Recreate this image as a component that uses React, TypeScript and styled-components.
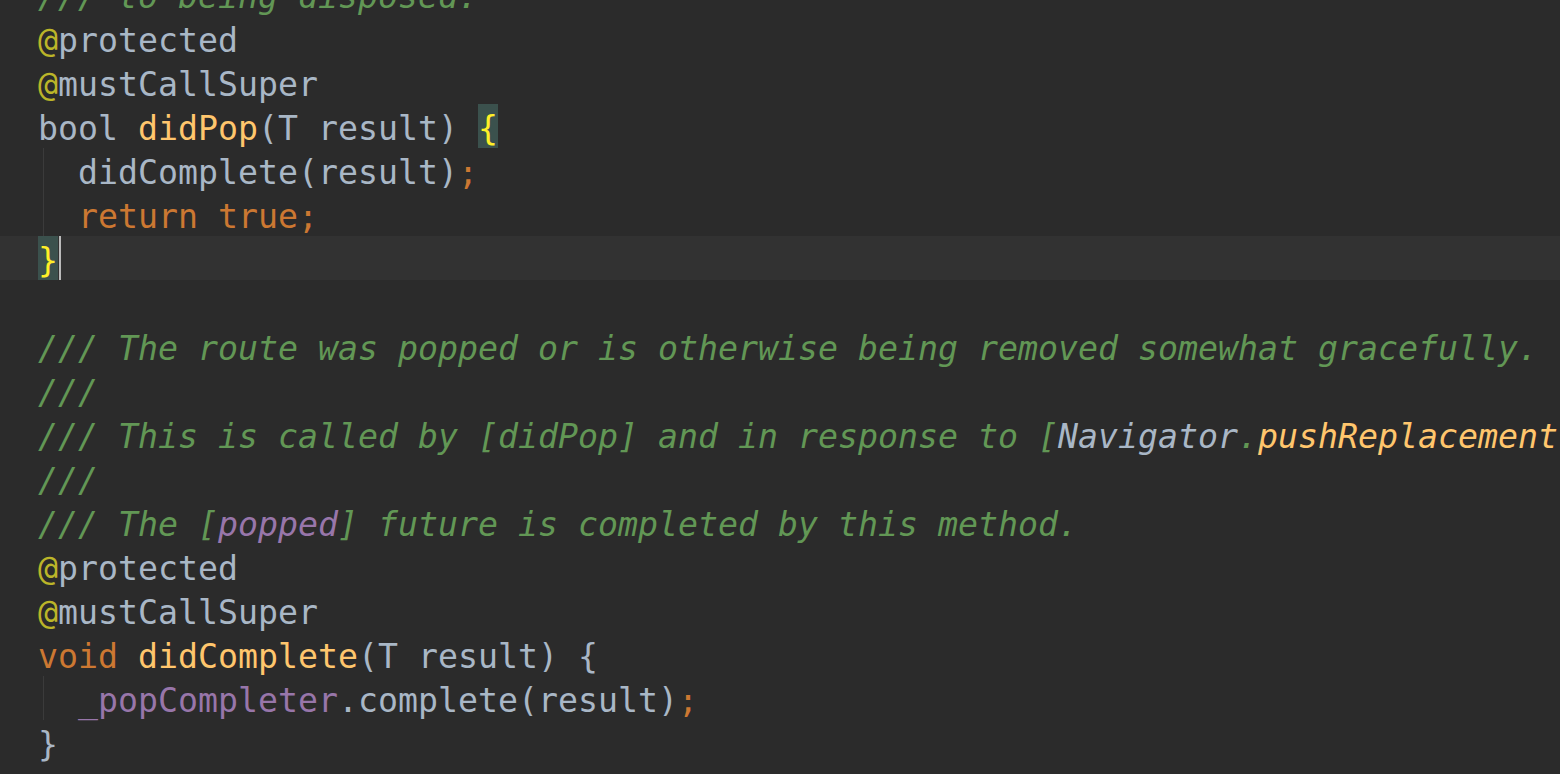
import React from "react";
import styled, { createGlobalStyle, css } from "styled-components";

const Global = createGlobalStyle`
  html, body {
    margin: 0;
    padding: 0;
    background: #2b2b2b;
    overflow: hidden;
  }
  #root { width: 1560px; height: 774px; overflow: hidden; }
`;

type Kind =
  | "plain"
  | "keyword"
  | "fn"
  | "annotation"
  | "doc"
  | "docRef"
  | "docMethod"
  | "field"
  | "punct";

const colors: Record<Kind, string> = {
  plain: "#a9b7c6",
  keyword: "#cc7832",
  fn: "#ffc66d",
  annotation: "#bbb529",
  doc: "#629755",
  docRef: "#a9b7c6",
  docMethod: "#ffc66d",
  field: "#9876aa",
  punct: "#cc7832",
};

const Editor = styled.div`
  width: 1560px;
  height: 774px;
  overflow: hidden;
  background: #2b2b2b;
  font-family: "DejaVu Sans Mono", "Liberation Mono", monospace;
  font-size: 33.22px;
  color: #a9b7c6;
`;

const Code = styled.div`
  display: flex;
  flex-direction: column;
  margin-top: -28px;
`;

const Line = styled.div<{ $current?: boolean }>`
  display: flex;
  align-items: center;
  box-sizing: border-box;
  height: 44px;
  padding: 4px 0 0 38px;
  white-space: pre;
  ${(p) =>
    p.$current &&
    css`
      background: #323232;
    `}
`;

const Token = styled.span<{ $kind: Kind }>`
  color: ${(p) => colors[p.$kind]};
  ${(p) =>
    (p.$kind === "doc" || p.$kind === "docRef" || p.$kind === "docMethod" ||
      p.$kind === "field") &&
    css`
      font-style: italic;
    `}
`;

const FieldToken = styled.span`
  color: #9876aa;
`;

const Indent = styled.span`
  align-self: stretch;
  margin-top: -4px;
  width: 40px;
  display: flex;
  &::before {
    content: "";
    display: block;
    margin-left: 5px;
    width: 1px;
    background: #3b3b3b;
  }
`;

const Match = styled.span`
  align-self: stretch;
  margin-top: -4px;
  padding-top: 4px;
  display: flex;
  align-items: center;
  background: #3b514d;
  color: #ffef28;
`;

const Caret = styled.span`
  align-self: stretch;
  margin-top: -4px;
  width: 2px;
  margin-left: 1px;
  background: #bbbbbb;
`;

const T = ({ k, children }: { k: Kind; children: React.ReactNode }) => (
  <Token $kind={k}>{children}</Token>
);

export default function App() {
  return (
    <Editor>
      <Global />
      <Code>
        <Line>
          <T k="doc">/// to being disposed.</T>
        </Line>
        <Line>
          <T k="annotation">@</T>
          <T k="plain">protected</T>
        </Line>
        <Line>
          <T k="annotation">@</T>
          <T k="plain">mustCallSuper</T>
        </Line>
        <Line>
          <T k="plain">bool </T>
          <T k="fn">didPop</T>
          <T k="plain">(T result) </T>
          <Match>{"{"}</Match>
        </Line>
        <Line>
          <Indent />
          <T k="plain">didComplete(result)</T>
          <T k="punct">;</T>
        </Line>
        <Line>
          <Indent />
          <T k="keyword">return true;</T>
        </Line>
        <Line $current>
          <Match>{"}"}</Match>
          <Caret />
        </Line>
        <Line />
        <Line>
          <T k="doc">/// The route was popped or is otherwise being removed somewhat gracefully.</T>
        </Line>
        <Line>
          <T k="doc">///</T>
        </Line>
        <Line>
          <T k="doc">/// This is called by [didPop] and in response to [</T>
          <T k="docRef">Navigator</T>
          <T k="doc">.</T>
          <T k="docMethod">pushReplacement</T>
          <T k="doc">].</T>
        </Line>
        <Line>
          <T k="doc">///</T>
        </Line>
        <Line>
          <T k="doc">/// The [</T>
          <T k="field">popped</T>
          <T k="doc">] future is completed by this method.</T>
        </Line>
        <Line>
          <T k="annotation">@</T>
          <T k="plain">protected</T>
        </Line>
        <Line>
          <T k="annotation">@</T>
          <T k="plain">mustCallSuper</T>
        </Line>
        <Line>
          <T k="keyword">void </T>
          <T k="fn">didComplete</T>
          <T k="plain">(T result) {"{"}</T>
        </Line>
        <Line>
          <Indent />
          <FieldToken>_popCompleter</FieldToken>
          <T k="plain">.complete(result)</T>
          <T k="punct">;</T>
        </Line>
        <Line>
          <T k="plain">{"}"}</T>
        </Line>
      </Code>
    </Editor>
  );
}
